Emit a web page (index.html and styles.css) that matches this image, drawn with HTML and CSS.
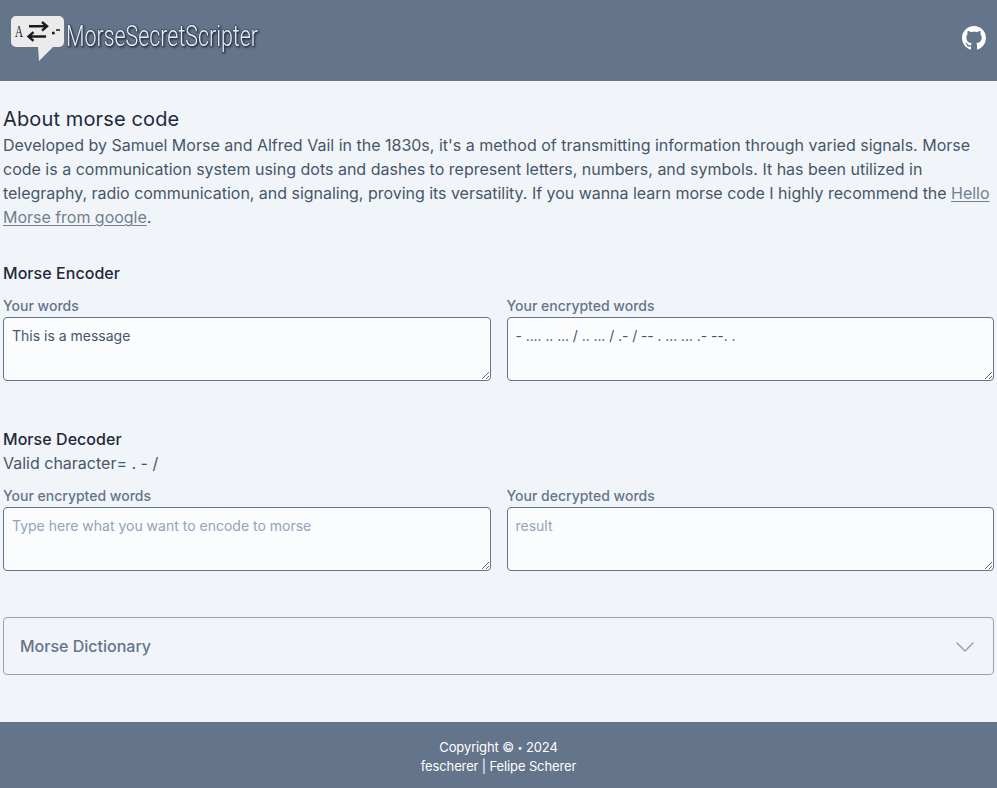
FILE: index.html
```html
<!DOCTYPE html>
<html lang="en">
<head>
<meta charset="utf-8">
<title>MorseSecretScripter</title>
<link rel="stylesheet" href="styles.css">
</head>
<body>
<header class="header">
  <svg class="logo" width="252" height="52" viewBox="0 0 252 52" role="img" aria-label="MorseSecretScripter">
    <path fill="#ebebeb" d="M6 4H49A5 5 0 0 1 54 9V30A5 5 0 0 1 49 35H43L29 49L28 35H6A5 5 0 0 1 1 30V9A5 5 0 0 1 6 4Z"/>
    <text class="logo-letter" x="5" y="25" textLength="8" lengthAdjust="spacingAndGlyphs">A</text>
    <path fill="none" stroke="#1c1c1c" stroke-width="2.400" d="M19 14.300H36.500M32 10L37 14.300L32 18.600M36 24.500H19M23.500 20.200L18.500 24.500L23.500 28.800"/>
    <circle cx="43.300" cy="21" r="1.500" fill="#1c1c1c"/>
    <path stroke="#1c1c1c" stroke-width="1.500" d="M46 18H50"/>
    <text class="logo-name" x="56" y="34" textLength="192" lengthAdjust="spacingAndGlyphs">MorseSecretScripter</text>
  </svg>
  <a class="github" aria-label="GitHub">
    <svg width="24" height="24" viewBox="0 0 16 16" fill="#fff"><path d="M8 0C3.580 0 0 3.580 0 8c0 3.540 2.290 6.530 5.470 7.590.4.070.55-.17.55-.38 0-.19-.01-.82-.01-1.490-2.010.37-2.530-.49-2.690-.94-.09-.23-.48-.94-.82-1.130-.28-.15-.68-.52-.01-.53.63-.01 1.080.58 1.230.82.72 1.210 1.870.87 2.330.66.07-.52.28-.87.51-1.070-1.780-.2-3.640-.89-3.640-3.950 0-.87.31-1.590.82-2.150-.08-.2-.36-1.020.08-2.120 0 0 .67-.21 2.200.82.64-.18 1.320-.27 2-.27s1.360.09 2 .27c1.530-1.040 2.200-.82 2.200-.82.44 1.100.16 1.920.08 2.120.51.56.82 1.270.82 2.150 0 3.070-1.870 3.750-3.650 3.950.29.25.54.73.54 1.480 0 1.070-.01 1.930-.01 2.200 0 .21.15.46.55.38A8.010 8.010 0 0 0 16 8c0-4.420-3.580-8-8-8z"/></svg>
  </a>
</header>
<main class="main">
  <section class="about">
    <h1>About morse code</h1>
    <p>Developed by Samuel Morse and Alfred Vail in the 1830s, it's a method of transmitting information through varied signals. Morse code is a communication system using dots and dashes to represent letters, numbers, and symbols. It has been utilized in <span class="tight">telegraphy, radio communication, and signaling, proving its versatility. If you wanna learn morse code I highly recommend the <a>Hello Morse from google</a>.</span></p>
  </section>
  <section class="encoder">
    <h2>Morse Encoder</h2>
    <div class="fields">
      <label class="field">Your words<textarea>This is a message</textarea></label>
      <label class="field">Your encrypted words<textarea class="morse">- .... .. ... / .. ... / .- / -- . ... ... .- --. .</textarea></label>
    </div>
  </section>
  <section class="decoder">
    <h2>Morse Decoder</h2>
    <p>Valid character= . - /</p>
    <div class="fields">
      <label class="field">Your encrypted words<textarea placeholder="Type here what you want to encode to morse"></textarea></label>
      <label class="field">Your decrypted words<textarea placeholder="result"></textarea></label>
    </div>
  </section>
  <section class="dictionary">
    <span>Morse Dictionary</span>
    <svg width="18" height="10" viewBox="0 0 18 10" fill="none" stroke="#94a3b8" stroke-width="1.500" stroke-linecap="round" stroke-linejoin="round"><path d="M1 1L9 9L17 1"/></svg>
  </section>
</main>
<footer class="footer">
  <p>Copyright © <span class="dot">•</span> 2024</p>
  <p>fescherer | Felipe Scherer</p>
</footer>
</body>
</html>
```
FILE: styles.css
```css
* { box-sizing: border-box; }
body {
  margin: 0;
  min-height: 788px;
  display: flex;
  flex-direction: column;
  background: #f1f5f9;
  color: #475569;
  font: 16px/24px Inter, sans-serif;
}
h1, h2, p { margin: 0; }
h1, h2 { color: #1e293b; }
.header {
  height: 81px;
  padding: 12px 11px 0 10px;
  display: flex;
  justify-content: space-between;
  background: #64748b;
}
.logo { overflow: visible; }
.logo-letter { font: 16px "Liberation Serif", serif; fill: #1c1c1c; }
.logo-name {
  font: 300 30px Roboto, sans-serif;
  fill: #e8f0f4;
  stroke: #334155;
  stroke-width: 1px;
  paint-order: stroke;
  filter: drop-shadow(1px 1px 1px #1e293b);
}
.github { height: 24px; margin-top: 14px; }
.main { flex: 1; padding: 25px 3px 0; }
.about h1 { font-size: 20px; line-height: 26px; font-weight: 400; letter-spacing: .13px; }
.about p { margin-top: 1px; }
.tight { letter-spacing: -.026px; }
.about a { color: #708090; text-decoration: underline; text-underline-offset: 2px; text-decoration-thickness: 1px; }
.encoder { margin-top: 32px; }
.decoder { margin-top: 46px; }
h2 { font-size: 16px; line-height: 24px; font-weight: 450; letter-spacing: .05px; }
.fields { display: grid; grid-template-columns: 1fr 1fr; gap: 16px; margin-top: 10px; }
.field {
  display: flex;
  flex-direction: column;
  font-size: 14px;
  line-height: 22px;
  font-weight: 500;
  color: #64748b;
}
textarea {
  height: 64px;
  padding: 8px;
  border: 1px solid #64748b;
  border-radius: 4px;
  background: #fafcfe;
  color: #475569;
  font: 14px/20px Inter, sans-serif;
  resize: vertical;
}
.morse { letter-spacing: -.08px; }
textarea::placeholder { color: #94a3b8; }
.dictionary {
  height: 58px;
  margin-top: 46px;
  padding: 0 19px 0 16px;
  display: flex;
  align-items: center;
  justify-content: space-between;
  border: 1px solid #94a3b8;
  border-radius: 4px;
  color: #64748b;
  font-weight: 500;
}
.dictionary svg { margin-top: 1px; }
.footer {
  height: 66px;
  padding-top: 16px;
  background: #64748b;
  color: #fff;
  text-align: center;
  font-size: 13px;
  line-height: 19px;
  letter-spacing: -.13px;
}
.dot { font-size: 9px; vertical-align: 1px; line-height: 1; }
```
